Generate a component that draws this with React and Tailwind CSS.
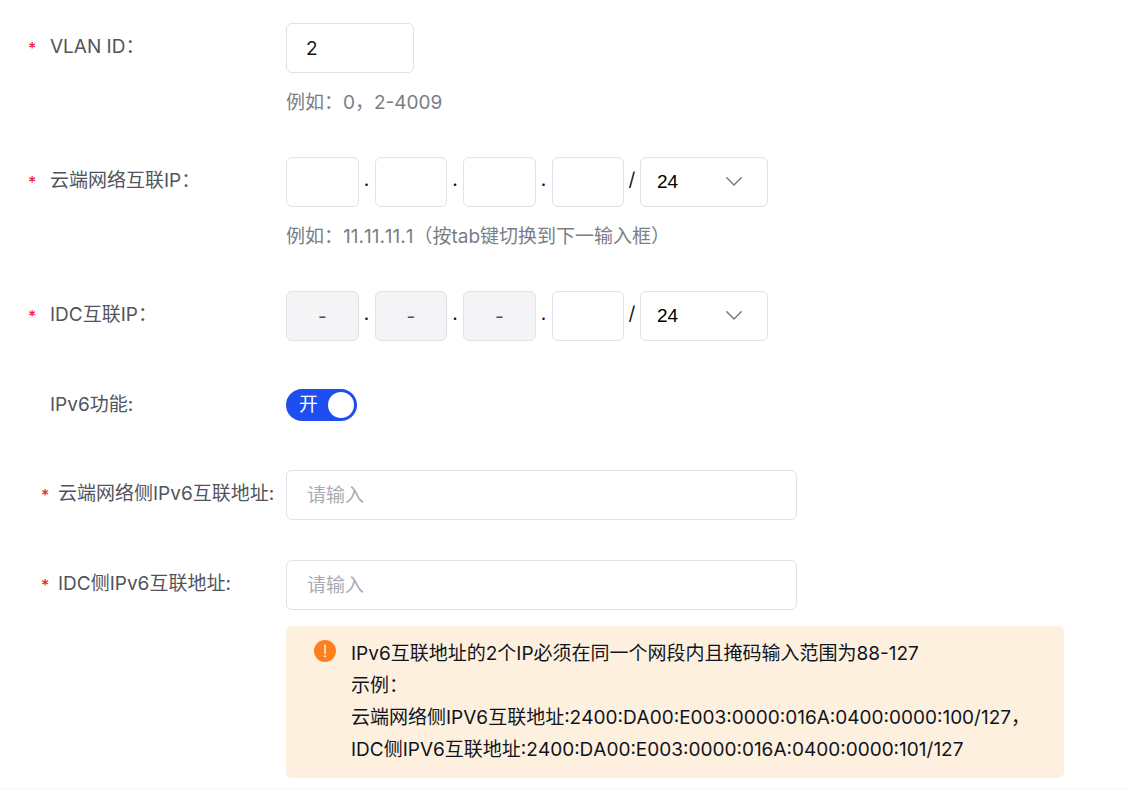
import { useState } from 'react';
import clsx from 'clsx';

const masks = ['24', '25', '26', '27', '28', '29', '30'];

const inputClass =
    'h-[50px] rounded-md border border-[#e1e2e6] bg-white text-[#10141c] placeholder:text-[#a9abb3] focus:border-[#1e4df0] focus:outline-none';

function FormRow({ label, htmlFor, required, nested, tall = true, children }) {
    return (
        <div className="flex items-start">
            <div className={clsx('flex w-[286px] shrink-0 items-center text-[#51545c]', nested ? 'pl-[41px]' : 'pl-7', tall ? 'h-[49px]' : 'h-8')}>
                <span className={clsx('shrink-0 text-base font-medium text-[#f5222d]', nested ? 'w-[17px]' : 'w-[22px]')}>{required && '*'}</span>
                <label htmlFor={htmlFor} className="whitespace-nowrap">{label}</label>
            </div>
            <div className="min-w-0 flex-1">{children}</div>
        </div>
    );
}

function Hint({ children }) {
    return <p className="mt-4 leading-7 text-[#7a7d86] [font-kerning:none]">{children}</p>;
}

function Separator({ children }) {
    return <span className="w-4 shrink-0 pb-1 text-center text-[#10141c]">{children}</span>;
}

function MaskSelect({ label }) {
    return (
        <div className="relative w-32 shrink-0">
            <select
                aria-label={label}
                defaultValue="24"
                className="h-[50px] w-full appearance-none rounded-md border border-[#e1e2e6] bg-white pl-4 font-['Liberation_Sans',sans-serif] text-black focus:outline-none"
            >
                {masks.map((mask) => (
                    <option key={mask} value={mask}>{mask}</option>
                ))}
            </select>
            <svg viewBox="0 0 16 9" className="pointer-events-none absolute top-5 right-[26px] h-[9px] w-4" fill="none" stroke="#73767f" strokeWidth="1.4" strokeLinecap="round" strokeLinejoin="round">
                <path d="M.8.8 8 8 15.2.8" />
            </svg>
        </div>
    );
}

function IpInput({ id, label, locked = 0 }) {
    return (
        <div className="flex items-center">
            <div className="flex w-[338px] items-center">
                {[0, 1, 2, 3].map((part) => (
                    <div key={part} className="contents">
                        {part > 0 && <Separator>.</Separator>}
                        <input
                            id={part === 0 ? id : undefined}
                            aria-label={`${label} ${part + 1}`}
                            disabled={part < locked}
                            defaultValue={part < locked ? '-' : ''}
                            className="h-[50px] w-0 min-w-0 flex-1 rounded-md border border-[#e1e2e6] bg-white text-center text-[#10141c] focus:border-[#1e4df0] focus:outline-none disabled:bg-[#f4f4f7] disabled:text-[#51545c]"
                        />
                    </div>
                ))}
            </div>
            <Separator>/</Separator>
            <MaskSelect label={`${label} 掩码`} />
        </div>
    );
}

export default function App() {
    const [ipv6, setIpv6] = useState(true);

    return (
        <form className="border-b-2 border-[#fafafa] bg-white pt-[23px] pb-[10px] font-['Inter','Noto_Sans_CJK_SC',sans-serif] text-[19px]">
            <FormRow label="VLAN ID：" htmlFor="vlan" required>
                <input id="vlan" defaultValue="2" className={clsx(inputClass, 'block w-32 px-[19px]')} />
                <Hint>例如：0，2-4009</Hint>
            </FormRow>

            <div className="mt-10">
                <FormRow label="云端网络互联IP：" htmlFor="cloud-ip" required>
                    <IpInput id="cloud-ip" label="云端网络互联IP" />
                    <Hint>例如：11.11.11.1（按tab键切换到下一输入框）</Hint>
                </FormRow>
            </div>

            <div className="mt-10">
                <FormRow label="IDC互联IP：" htmlFor="idc-ip" required>
                    <IpInput id="idc-ip" label="IDC互联IP" locked={3} />
                </FormRow>
            </div>

            <div className="mt-12">
                <FormRow label="IPv6功能:" htmlFor="ipv6" tall={false}>
                    <button
                        id="ipv6"
                        type="button"
                        role="switch"
                        aria-checked={ipv6}
                        onClick={() => setIpv6(!ipv6)}
                        className={clsx('flex h-8 w-[71px] items-center justify-between rounded-full pr-[3px] pl-[13px] text-white', ipv6 ? 'bg-[#1e4df0]' : 'flex-row-reverse bg-[#b8bac1]')}
                    >
                        <span>{ipv6 ? '开' : '关'}</span>
                        <span className="size-[26px] rounded-full bg-white" />
                    </button>
                </FormRow>
            </div>

            <div className="mt-[49px]">
                <FormRow label="云端网络侧IPv6互联地址:" htmlFor="cloud-ipv6" required nested>
                    <input id="cloud-ipv6" placeholder="请输入" className={clsx(inputClass, 'block w-[511px] max-w-full px-5')} />
                </FormRow>
            </div>

            <div className="mt-10">
                <FormRow label="IDC侧IPv6互联地址:" htmlFor="idc-ipv6" required nested>
                    <input id="idc-ipv6" placeholder="请输入" className={clsx(inputClass, 'block w-[511px] max-w-full px-5')} />
                    <div className="mt-4 mr-[62px] flex gap-[15px] rounded-md bg-[#fef0df] pt-3 pr-6 pb-3 pl-7 leading-8 text-[#10141c]">
                        <svg viewBox="0 0 22 22" className="mt-[2px] size-[22px] shrink-0">
                            <circle cx="11" cy="11" r="11" fill="#ff7f1f" />
                            <path d="M11 5v8.4" stroke="#fff" strokeWidth="1.4" strokeLinecap="round" />
                            <circle cx="11" cy="16.3" r="1" fill="#fff" />
                        </svg>
                        <div className="[font-kerning:none]">
                            <p>IPv6互联地址的2个IP必须在同一个网段内且掩码输入范围为88-127</p>
                            <p>示例：</p>
                            <p>云端网络侧IPV6互联地址:2400:DA00:E003:0000:016A:0400:0000:100/127，</p>
                            <p>IDC侧IPV6互联地址:2400:DA00:E003:0000:016A:0400:0000:101/127</p>
                        </div>
                    </div>
                </FormRow>
            </div>
        </form>
    );
}
